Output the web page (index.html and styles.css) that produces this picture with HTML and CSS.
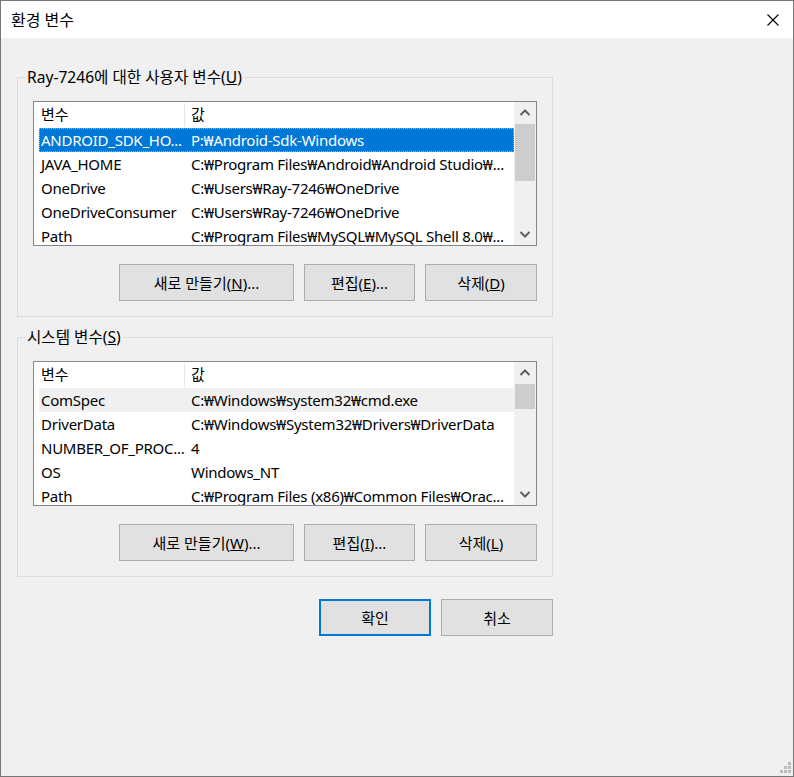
FILE: index.html
```html
<!DOCTYPE html>
<html lang="ko">
<head>
    <meta charset="UTF-8">
    <meta name="viewport" content="width=device-width, initial-scale=1.0">
    <title>환경 변수</title>
    <link rel="stylesheet" href="styles.css">
</head>
<body>
    <div class="window">
        <div class="titlebar">
            <span class="title">환경 변수</span>
            <span class="close">
                <svg width="12" height="12" viewBox="0 0 12 12"><path d="M0.5 0.5L11.5 11.5M11.5 0.5L0.5 11.5" stroke="#000" stroke-width="1.1" fill="none"/></svg>
            </span>
        </div>
        <div class="content">
            <!-- 사용자 변수 -->
            <fieldset class="group group-user">
                <legend>Ray-7246에 대한 사용자 변수(<u>U</u>)</legend>
                <div class="list">
                    <div class="list-rows">
                        <div class="list-head"><span>변수</span><span>값</span></div>
                        <div class="row row-selected"><span>ANDROID_SDK_HO...</span><span>P:₩Android-Sdk-Windows</span></div>
                        <div class="row"><span>JAVA_HOME</span><span>C:₩Program Files₩Android₩Android Studio₩...</span></div>
                        <div class="row"><span>OneDrive</span><span>C:₩Users₩Ray-7246₩OneDrive</span></div>
                        <div class="row"><span>OneDriveConsumer</span><span>C:₩Users₩Ray-7246₩OneDrive</span></div>
                        <div class="row"><span>Path</span><span>C:₩Program Files₩MySQL₩MySQL Shell 8.0₩...</span></div>
                    </div>
                    <div class="scrollbar">
                        <div class="scroll-arrow"><svg width="20" height="21" viewBox="0 0 20 21"><path d="M5.5 13L10 8.5L14.5 13" stroke="#606060" stroke-width="2" fill="none"/></svg></div>
                        <div class="scroll-track"><div class="thumb thumb-user"></div></div>
                        <div class="scroll-arrow"><svg width="20" height="21" viewBox="0 0 20 21"><path d="M5.5 8L10 12.5L14.5 8" stroke="#606060" stroke-width="2" fill="none"/></svg></div>
                    </div>
                </div>
                <div class="btn-row">
                    <button class="btn btn-wide">새로 만들기(<u>N</u>)...</button>
                    <button class="btn">편집(<u>E</u>)...</button>
                    <button class="btn btn-last">삭제(<u>D</u>)</button>
                </div>
            </fieldset>

            <!-- 시스템 변수 -->
            <fieldset class="group group-system">
                <legend>시스템 변수(<u>S</u>)</legend>
                <div class="list">
                    <div class="list-rows">
                        <div class="list-head"><span>변수</span><span>값</span></div>
                        <div class="row row-inactive"><span>ComSpec</span><span>C:₩Windows₩system32₩cmd.exe</span></div>
                        <div class="row"><span>DriverData</span><span>C:₩Windows₩System32₩Drivers₩DriverData</span></div>
                        <div class="row"><span>NUMBER_OF_PROC...</span><span>4</span></div>
                        <div class="row"><span>OS</span><span>Windows_NT</span></div>
                        <div class="row"><span>Path</span><span>C:₩Program Files (x86)₩Common Files₩Orac...</span></div>
                    </div>
                    <div class="scrollbar">
                        <div class="scroll-arrow"><svg width="20" height="21" viewBox="0 0 20 21"><path d="M5.5 13L10 8.5L14.5 13" stroke="#606060" stroke-width="2" fill="none"/></svg></div>
                        <div class="scroll-track"><div class="thumb thumb-system"></div></div>
                        <div class="scroll-arrow"><svg width="20" height="21" viewBox="0 0 20 21"><path d="M5.5 8L10 12.5L14.5 8" stroke="#606060" stroke-width="2" fill="none"/></svg></div>
                    </div>
                </div>
                <div class="btn-row">
                    <button class="btn btn-wide">새로 만들기(<u>W</u>)...</button>
                    <button class="btn">편집(<u>I</u>)...</button>
                    <button class="btn btn-last">삭제(<u>L</u>)</button>
                </div>
            </fieldset>

            <div class="dialog-buttons">
                <button class="btn btn-default">확인</button>
                <button class="btn">취소</button>
            </div>
        </div>
        <svg class="grip" width="12" height="12" viewBox="0 0 12 12" fill="#bcbcbc">
            <rect x="8" y="0" width="3" height="3"/>
            <rect x="4" y="4" width="3" height="3"/>
            <rect x="8" y="4" width="3" height="3"/>
            <rect x="0" y="8" width="3" height="3"/>
            <rect x="4" y="8" width="3" height="3"/>
            <rect x="8" y="8" width="3" height="3"/>
        </svg>
    </div>
</body>
</html>
```

FILE: styles.css
```css
:root {
    --bg-color: #f0f0f0;
    --active-color: #0078d7;
    --btn-color: #e1e1e1;
    --btn-border: #adadad;
}
body{
    margin: 0;
    font-family: "Noto Sans", "Noto Sans CJK KR", sans-serif;
    font-size: 15px;
    color: #000;
}
.window{
    position: relative;
    width: 794px;
    height: 777px;
    box-sizing: border-box;
    border: 1px solid #777777;
    background: var(--bg-color);
    overflow: hidden;
}
.titlebar{
    display: flex;
    align-items: center;
    justify-content: space-between;
    height: 37px;
    padding: 0 14px 0 10px;
    background: #fff;
}
.title{
    font-size: 16px;
    line-height: 20px;
}
.close svg{
    display: block;
}
.content{
    padding-top: 0.1px;
}
.group{
    width: 536px;
    box-sizing: border-box;
    margin: 0 0 0 16px;
    padding: 14px 15px 15px;
    border: 1px solid #dcdcdc;
}
.group-user{
    margin-top: 29px;
}
.group-system{
    margin-top: 10px;
}
.group legend{
    margin-left: -8px;
    padding: 0 2px;
    font-size: 15.6px;
    line-height: 20px;
}
.list{
    display: flex;
    height: 145px;
    box-sizing: border-box;
    border: 1px solid #828790;
    background: #fff;
}
.list-rows{
    flex: 1;
    overflow: hidden;
}
.list-head,.row{
    display: grid;
    white-space: nowrap;
    margin-left: 5px;
}
.list-head{
    grid-template-columns: 146px 1fr;
    height: 26px;
    line-height: 25px;
}
.list-head span:first-child{
    padding-left: 2px;
    border-right: 1px solid #e5e5e5;
    margin: 1px 0;
    line-height: 23px;
}
.list-head span:last-child{
    padding-left: 6px;
}
.row{
    grid-template-columns: 150px 1fr;
    height: 24px;
    line-height: 24px;
    letter-spacing: -0.25px;
}
.row span{
    padding-left: 2px;
    overflow: hidden;
}
.row-selected{
    background: var(--active-color);
    color: #fff;
    outline: 1px dotted #f0a050;
    outline-offset: -1px;
}
.row-inactive{
    background: #f0f0f0;
}
.scrollbar{
    display: flex;
    flex-direction: column;
    width: 22px;
    padding: 0 1px;
    box-sizing: border-box;
    background: var(--bg-color);
}
.scroll-arrow{
    height: 21px;
}
.scroll-arrow svg{
    display: block;
}
.scroll-track{
    flex: 1;
    padding-top: 1px;
}
.thumb{
    background: #cdcdcd;
}
.thumb-user{
    height: 57px;
}
.thumb-system{
    height: 25px;
}
.btn-row{
    display: flex;
    justify-content: flex-end;
    gap: 10px;
    margin-top: 18px;
}
.btn{
    width: 111px;
    height: 37px;
    box-sizing: border-box;
    padding: 0;
    border: 1px solid var(--btn-border);
    background: var(--btn-color);
    font: inherit;
    color: #000;
    line-height: 20px;
}
.btn-wide{
    width: 175px;
}
.btn-last{
    width: 112px;
}
.btn-default{
    border: 2px solid var(--active-color);
}
.dialog-buttons{
    display: flex;
    justify-content: flex-end;
    gap: 10px;
    width: 536px;
    margin: 22px 0 0 16px;
}
.dialog-buttons .btn{
    width: 112px;
}
.grip{
    position: absolute;
    right: 1px;
    bottom: 2px;
}
```
